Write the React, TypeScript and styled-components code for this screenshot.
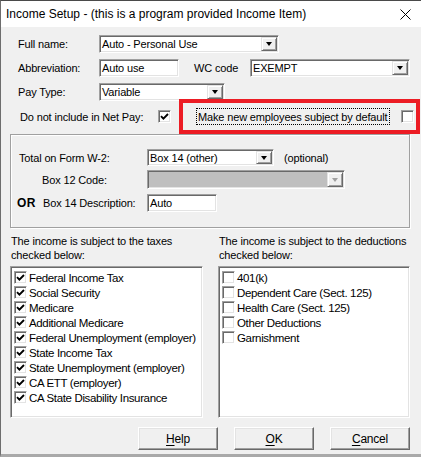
import styled, { createGlobalStyle } from "styled-components";

const GlobalStyle = createGlobalStyle`
  html, body {
    margin: 0;
    padding: 0;
    background: #f0f0f0;
  }
  * {
    box-sizing: border-box;
  }
`;

const Window = styled.div`
  width: 421px;
  height: 457px;
  display: flex;
  flex-direction: column;
  border-left: 1px solid #6d6d6d;
  border-top: 1px solid #4a4a4a;
  border-bottom: 3px solid #a9a9a9;
  background: #f0f0f0;
  font-family: "Liberation Sans", Arial, sans-serif;
  font-size: 11px;
  letter-spacing: -0.15px;
  color: #000;
  overflow: hidden;
`;

const TitleBar = styled.div`
  height: 26px;
  flex: none;
  background: #fff;
  display: flex;
  align-items: center;
  justify-content: space-between;
  padding: 0 10px 0 5px;
  font-size: 12px;
  letter-spacing: 0;
`;

const Body = styled.div`
  flex: 1;
  display: flex;
  flex-direction: column;
  padding: 8px 11px 0 9px;
`;

const Row = styled.div<{ $top?: number; $h?: number }>`
  display: flex;
  align-items: center;
  height: ${(p) => p.$h ?? 18}px;
  margin-top: ${(p) => p.$top ?? 0}px;
  flex: none;
`;

const Label = styled.span<{ $w: number; $indent?: number }>`
  width: ${(p) => p.$w}px;
  padding-left: ${(p) => p.$indent ?? 0}px;
  flex: none;
  white-space: nowrap;
`;

const Field = styled.div<{ $w: number; $h?: number; $disabled?: boolean }>`
  width: ${(p) => p.$w}px;
  height: ${(p) => p.$h ?? 18}px;
  flex: none;
  display: flex;
  align-items: stretch;
  border: 1px solid;
  border-color: #a0a0a0 #fff #fff #a0a0a0;
  box-shadow: inset 1px 1px 0 #696969, inset -1px -1px 0 #e3e3e3;
  background: ${(p) => (p.$disabled ? "#bfbfbf" : "#fff")};
  padding: 1px;
`;

const FieldText = styled.span`
  flex: 1;
  display: flex;
  align-items: center;
  padding-left: 1px;
  white-space: nowrap;
  overflow: hidden;
`;

const DropButton = styled.span<{ $disabled?: boolean }>`
  width: 16px;
  flex: none;
  display: flex;
  align-items: center;
  justify-content: center;
  background: #f0f0f0;
  border: 1px solid;
  border-color: #e3e3e3 #696969 #696969 #e3e3e3;
  box-shadow: inset 1px 1px 0 #fff, inset -1px -1px 0 #a0a0a0;

  &::after {
    content: "";
    border-left: 3.5px solid transparent;
    border-right: 3.5px solid transparent;
    border-top: 4px solid ${(p) => (p.$disabled ? "#a0a0a0" : "#000")};
  }
`;

const Check = styled.span`
  width: 13px;
  height: 13px;
  flex: none;
  display: flex;
  align-items: center;
  justify-content: center;
  background: #fff;
  border: 1px solid;
  border-color: #a0a0a0 #fff #fff #a0a0a0;
  box-shadow: inset 1px 1px 0 #696969, inset -1px -1px 0 #e3e3e3;
`;

const RedBox = styled.div`
  width: 241px;
  height: 35px;
  flex: none;
  margin-left: 8px;
  border: 4px solid #ec1c24;
  display: flex;
  align-items: center;
  padding-left: 13px;
`;

const FocusText = styled.span`
  height: 17px;
  display: flex;
  align-items: center;
  padding: 0 1px;
  border: 1px dotted #000;
  white-space: nowrap;
  margin-right: 11px;
`;

const GroupBox = styled.div`
  height: 94px;
  flex: none;
  border: 1px solid #a0a0a0;
  box-shadow: inset 1px 1px 0 #fff, 1px 1px 0 #fff;
  padding: 14px 0 0 6px;
  display: flex;
  flex-direction: column;
`;

const Bold = styled.b`
  width: 26px;
  flex: none;
  font-size: 12px;
  letter-spacing: 0.3px;
`;

const Hint = styled.span`
  margin-left: 10px;
`;

const Columns = styled.div`
  display: grid;
  grid-template-columns: 193px 192px;
  column-gap: 15px;
  margin-top: 6px;
`;

const Column = styled.div`
  display: flex;
  flex-direction: column;
`;

const Heading = styled.div`
  line-height: 14px;
  height: 28px;
  padding-left: 1px;
`;

const ListBox = styled.div`
  height: 152px;
  margin-top: 4px;
  background: #fff;
  border: 1px solid;
  border-color: #a0a0a0 #fff #fff #a0a0a0;
  box-shadow: inset 1px 1px 0 #696969, inset -1px -1px 0 #e3e3e3;
  padding: 3px 2px 0 3px;
`;

const ListItem = styled.div`
  height: 15px;
  display: flex;
  align-items: center;
  gap: 2px;
  font-size: 11.5px;
  letter-spacing: -0.35px;
  white-space: nowrap;
`;

const ButtonRow = styled.div`
  display: flex;
  justify-content: flex-end;
  gap: 16px;
  margin-top: 9px;
`;

const Button = styled.div`
  width: 80px;
  height: 23px;
  display: flex;
  align-items: center;
  justify-content: center;
  background: #f0f0f0;
  border: 1px solid;
  border-color: #fff #696969 #696969 #fff;
  box-shadow: inset -1px -1px 0 #a0a0a0, inset 1px 1px 0 #e3e3e3;
  font-size: 12px;
  letter-spacing: -0.2px;

  u {
    text-decoration: underline;
    text-underline-offset: 2px;
  }
`;

function CheckMark() {
  return (
    <svg width="9" height="9" viewBox="0 0 9 9">
      <path d="M1 4.2 L3.4 6.6 L8 2" fill="none" stroke="#000" strokeWidth="1.9" />
    </svg>
  );
}

function Box({ checked }: { checked?: boolean }) {
  return <Check>{checked && <CheckMark />}</Check>;
}

function Combo({ w, h, value, disabled }: { w: number; h?: number; value?: string; disabled?: boolean }) {
  return (
    <Field $w={w} $h={h} $disabled={disabled}>
      <FieldText>{value}</FieldText>
      <DropButton $disabled={disabled} />
    </Field>
  );
}

const taxes = [
  "Federal Income Tax",
  "Social Security",
  "Medicare",
  "Additional Medicare",
  "Federal Unemployment (employer)",
  "State Income Tax",
  "State Unemployment (employer)",
  "CA ETT (employer)",
  "CA State Disability Insurance",
];

const deductions = [
  "401(k)",
  "Dependent Care (Sect. 125)",
  "Health Care (Sect. 125)",
  "Other Deductions",
  "Garnishment",
];

export default function App() {
  return (
    <>
      <GlobalStyle />
      <Window>
        <TitleBar>
          <span>Income Setup - (this is a program provided Income Item)</span>
          <svg width="11" height="11" viewBox="0 0 11 11">
            <path d="M0.5 0.5 L10.5 10.5 M10.5 0.5 L0.5 10.5" stroke="#000" strokeWidth="1" />
          </svg>
        </TitleBar>
        <Body>
          <Row>
            <Label $w={89} $indent={8}>Full name:</Label>
            <Combo w={180} value="Auto - Personal Use" />
          </Row>
          <Row $top={6}>
            <Label $w={89} $indent={8}>Abbreviation:</Label>
            <Field $w={80}>
              <FieldText>Auto use</FieldText>
            </Field>
            <Label $w={71} $indent={15}>WC code</Label>
            <Combo w={160} value="EXEMPT" />
          </Row>
          <Row $top={6}>
            <Label $w={89} $indent={8}>Pay Type:</Label>
            <Combo w={126} value="Variable" />
          </Row>
          <Row $top={-2} $h={35}>
            <Label $w={148} $indent={10}>Do not include in Net Pay:</Label>
            <Box checked />
            <RedBox>
              <FocusText>Make new employees subject by default</FocusText>
              <Box />
            </RedBox>
          </Row>
          <GroupBox>
            <Row $h={17}>
              <Label $w={130} $indent={2}>Total on Form W-2:</Label>
              <Combo w={127} h={17} value="Box 14 (other)" />
              <Hint>(optional)</Hint>
            </Row>
            <Row $top={4} $h={19}>
              <Label $w={130} $indent={25}>Box 12 Code:</Label>
              <Combo w={198} h={19} disabled />
            </Row>
            <Row $top={5}>
              <Bold>OR</Bold>
              <Label $w={104}>Box 14 Description:</Label>
              <Field $w={70}>
                <FieldText>Auto</FieldText>
              </Field>
            </Row>
          </GroupBox>
          <Columns>
            <Column>
              <Heading>
                The income is subject to the taxes
                <br />
                checked below:
              </Heading>
              <ListBox>
                {taxes.map((t) => (
                  <ListItem key={t}>
                    <Box checked />
                    <span>{t}</span>
                  </ListItem>
                ))}
              </ListBox>
            </Column>
            <Column>
              <Heading>
                The income is subject to the deductions
                <br />
                checked below:
              </Heading>
              <ListBox>
                {deductions.map((d) => (
                  <ListItem key={d}>
                    <Box />
                    <span>{d}</span>
                  </ListItem>
                ))}
              </ListBox>
            </Column>
          </Columns>
          <ButtonRow>
            <Button>
              <span>
                <u>H</u>elp
              </span>
            </Button>
            <Button>
              <span>
                <u>O</u>K
              </span>
            </Button>
            <Button>
              <span>
                <u>C</u>ancel
              </span>
            </Button>
          </ButtonRow>
        </Body>
      </Window>
    </>
  );
}
